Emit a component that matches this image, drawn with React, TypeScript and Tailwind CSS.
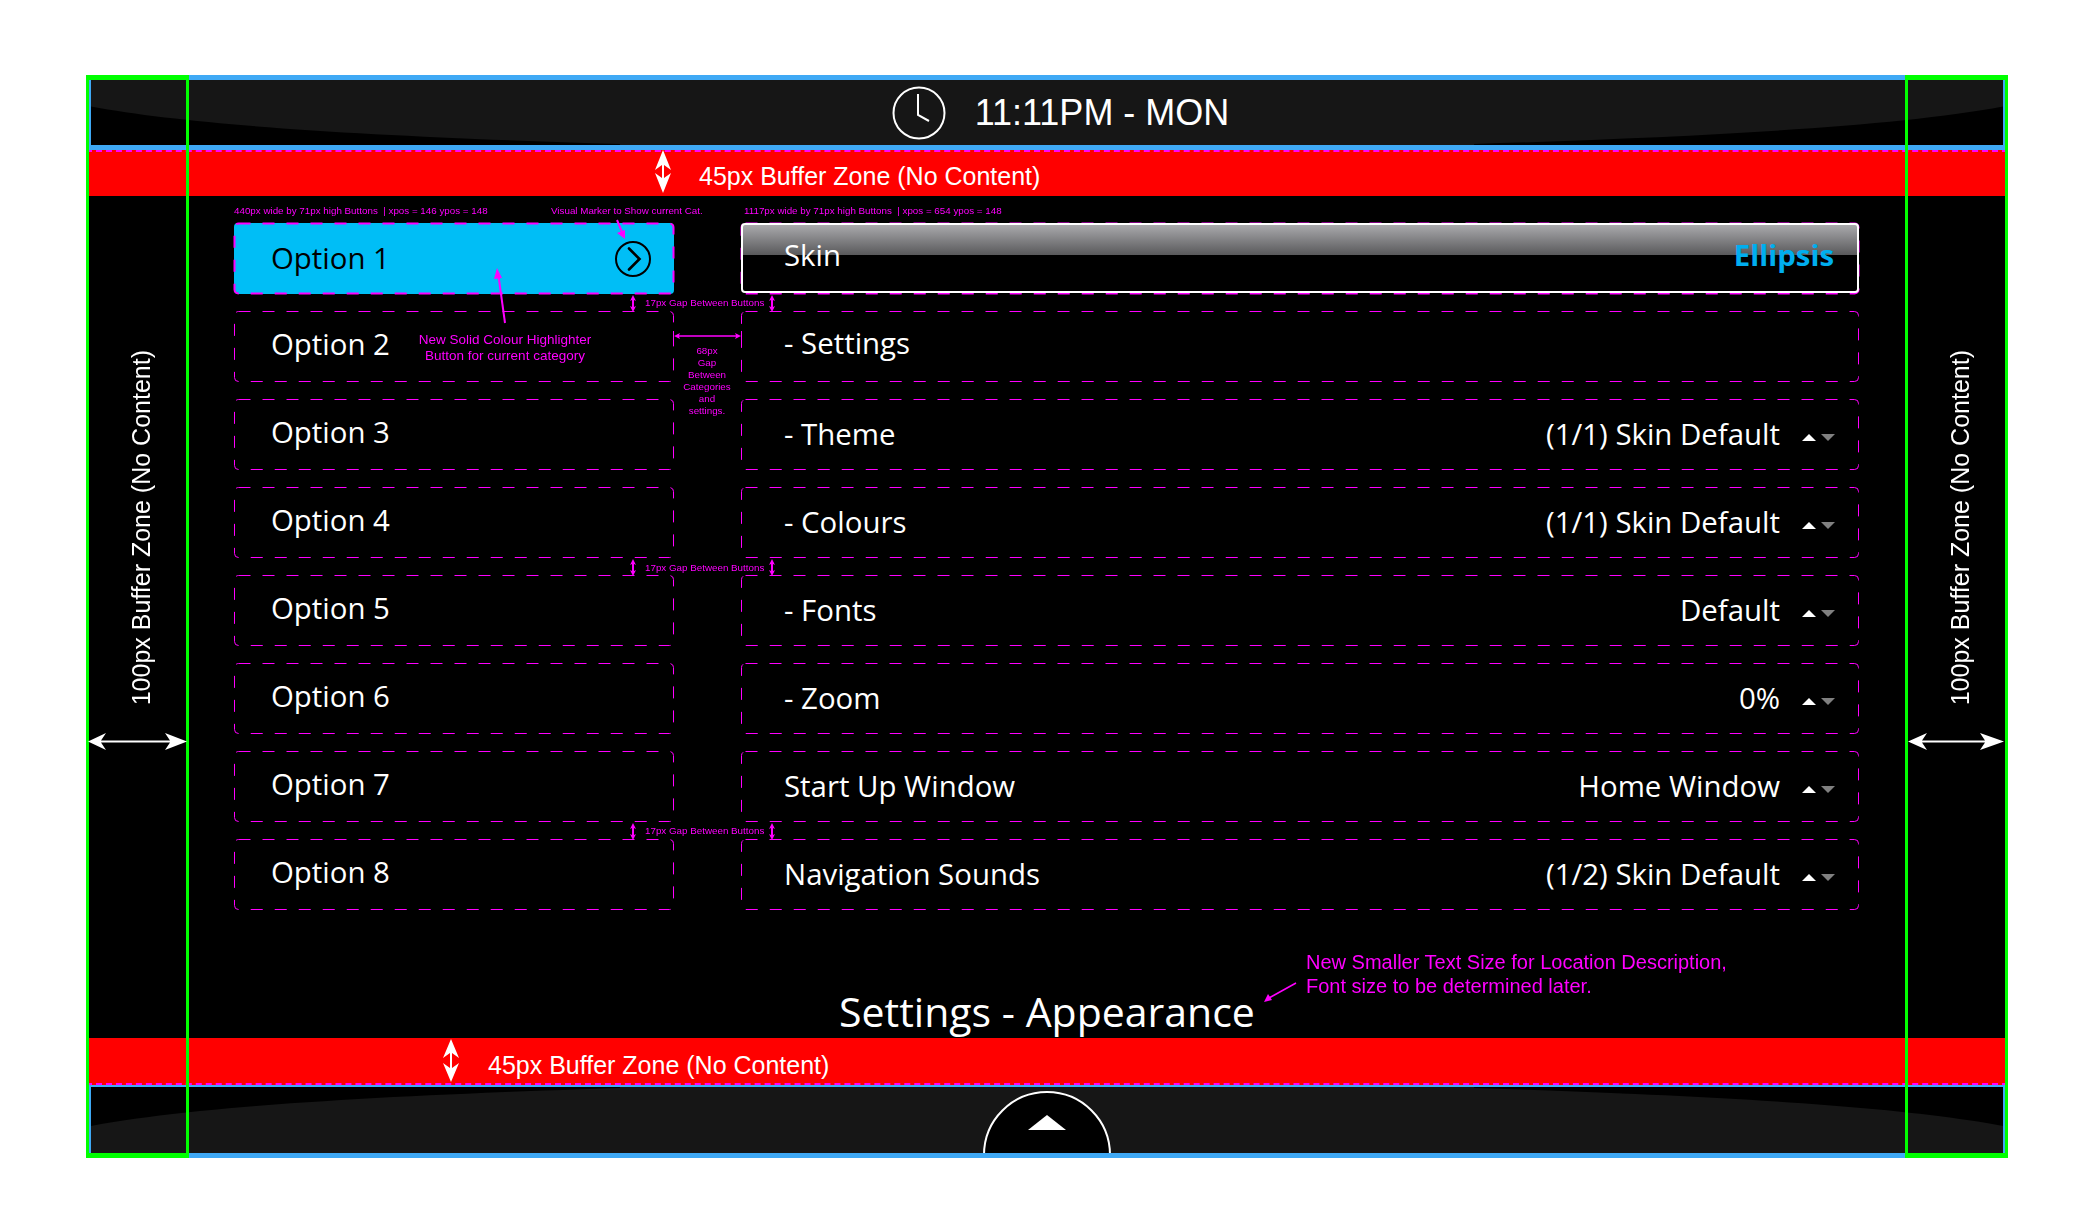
import React from 'react';

const leftOptions = ['Option 2', 'Option 3', 'Option 4', 'Option 5', 'Option 6', 'Option 7', 'Option 8'];

const settingRows = [
  { label: '- Settings' },
  { label: '- Theme', value: '(1/1) Skin Default' },
  { label: '- Colours', value: '(1/1) Skin Default' },
  { label: '- Fonts', value: 'Default' },
  { label: '- Zoom', value: '0%' },
  { label: 'Start Up Window', value: 'Home Window' },
  { label: 'Navigation Sounds', value: '(1/2) Skin Default' }
];

// dashed outline with the long dash of the wireframe
function DashedOutline({ thick = false }: { thick?: boolean }) {
  return (
    <svg className="absolute inset-0 w-full h-full overflow-visible pointer-events-none">
      <rect
        x="0.5"
        y="0.5"
        rx="4"
        className="w-[calc(100%-1px)] h-[calc(100%-1px)]"
        fill="none"
        stroke="#ff00ff"
        strokeWidth={thick ? 2 : 1}
        strokeDasharray="12 12"
      />
    </svg>
  );
}

function Stepper() {
  return (
    <svg width="34" height="10" viewBox="0 0 34 10" className="ml-[22px] mt-[7px]">
      <path d="M0 8 L7 1 L14 8 Z" fill="#ffffff" />
      <path d="M19 1 L33 1 L26 8 Z" fill="#808080" />
    </svg>
  );
}

// the white and magenta measuring arrows, in page coordinates
function Arrows() {
  const gapArrows = [
    [633, 295],
    [772, 295],
    [633, 559],
    [772, 559],
    [633, 823],
    [772, 823]
  ];
  return (
    <svg width="1922" height="1083" viewBox="86 75 1922 1083" className="absolute left-0 top-0 pointer-events-none">
      {/* 45px buffer */}
      <path d="M663 150 L671 170 L664 165 L664 178 L671 173 L663 193 L655 173 L662 178 L662 165 L655 170 Z" fill="#fff" />
      <path d="M451 1039 L459 1058 L452 1053 L452 1068 L459 1063 L451 1082 L443 1063 L450 1068 L450 1053 L443 1058 Z" fill="#fff" />
      {/* 100px buffer */}
      <g fill="#fff">
        <path d="M88 741.5 L106 733 L101 740.5 L170 740.5 L165 733 L187 741.5 L165 750 L170 742.5 L101 742.5 L106 750 Z" />
        <path d="M1908 741.5 L1927 733 L1922 740.5 L1985 740.5 L1980 733 L2004 741.5 L1980 750 L1985 742.5 L1922 742.5 L1927 750 Z" />
      </g>
      {gapArrows.map(([x, y]) => (
        <path
          key={`${x}-${y}`}
          d={`M${x} ${y} L${x + 3} ${y + 6} L${x + 1} ${y + 5} L${x + 1} ${y + 12} L${x + 3} ${y + 11} L${x} ${y + 17} L${x - 3} ${y + 11} L${x - 1} ${y + 12} L${x - 1} ${y + 5} L${x - 3} ${y + 6} Z`}
          fill="#ff00ff"
        />
      ))}
      {/* 68px gap */}
      <path d="M673.5 331 V342 M741.5 331 V342" stroke="#ff00ff" strokeWidth="1" />
      <path d="M674 336 L680 333 L679 335.2 L736 335.2 L735 333 L741 336 L735 339 L736 336.8 L679 336.8 L680 339 Z" fill="#ff00ff" />
      {/* pointers */}
      <path d="M505 323 L498.5 276" stroke="#ff00ff" strokeWidth="2" />
      <path d="M497 268 L502 278 L494 279 Z" fill="#ff00ff" />
      <path d="M617 220 L622 232" stroke="#ff00ff" strokeWidth="2" />
      <path d="M625 239 L617 233 L625 230 Z" fill="#ff00ff" />
      <path d="M1296 983 L1269 998" stroke="#ff00ff" strokeWidth="1.5" />
      <path d="M1264 1002 L1268 994 L1272 1000 Z" fill="#ff00ff" />
    </svg>
  );
}

function BarCurve({ flip = false }: { flip?: boolean }) {
  return (
    <svg
      viewBox="0 0 1916 66"
      preserveAspectRatio="none"
      className={`absolute left-0 top-0 w-full h-full ${flip ? 'rotate-x-180' : ''}`}
    >
      <path
        d="M0 27 C 110 48, 310 58, 530 65 L530 66 L0 66 Z M1916 27 C 1806 48, 1606 58, 1386 65 L1386 66 L1916 66 Z"
        fill="#000"
      />
    </svg>
  );
}

export default function App() {
  return (
    <div className="w-[2094px] h-[1232px] bg-white pt-[75px] pl-[86px] overflow-hidden font-['Open_Sans',sans-serif]">
      <div className="relative w-[1922px] h-[1083px] bg-black flex flex-col">
        {/* top bar */}
        <div className="relative h-[75px] shrink-0 border-[5px] border-[#3fa9f5] bg-[#161616]">
          <BarCurve />
          <div className="relative h-full flex items-center justify-center pl-[27px]">
            <svg width="54" height="54" viewBox="0 0 54 54" className="mr-[29px]">
              <circle cx="27" cy="27" r="25.5" fill="none" stroke="#fff" strokeWidth="2" />
              <path d="M26 8 V29 L37 35" fill="none" stroke="#fff" strokeWidth="2" />
            </svg>
            <span className="font-['Liberation_Sans',sans-serif] text-[36px] text-white">11:11PM - MON</span>
          </div>
        </div>

        {/* red buffer */}
        <div className="h-[46px] shrink-0 bg-[#ff0000] border-t-2 border-dashed border-[#ff00ff] pl-[613px] font-['Liberation_Sans',sans-serif] text-[25px] leading-[48px] text-white">
          45px Buffer Zone (No Content)
        </div>

        {/* main content */}
        <div className="flex-1 flex flex-col pt-[27px] pl-[148px]">
          <div className="flex gap-[67px]">
            <div className="w-[440px] flex flex-col gap-[17px] text-[29.4px] text-white">
              <div className="relative h-[71px] bg-[#00bef6] rounded flex items-center justify-between pl-[37px] pr-[22px] pb-[1px] text-black">
                <DashedOutline thick />
                <span>Option 1</span>
                <svg width="38" height="38" viewBox="0 0 38 38" className="mt-[1px]">
                  <circle cx="19" cy="19" r="17" fill="none" stroke="#000" strokeWidth="2" />
                  <path d="M15 8.5 L25.5 19 L15 29.5" fill="none" stroke="#000" strokeWidth="2.6" strokeLinecap="round" />
                </svg>
              </div>
              {leftOptions.map((option) => (
                <div key={option} className="relative h-[71px] flex items-center pl-[37px] pb-[5px]">
                  <DashedOutline />
                  <span>{option}</span>
                </div>
              ))}
            </div>

            <div className="w-[1118px] flex flex-col gap-[17px] text-[29.4px] text-white">
              <div className="relative h-[71px]">
                <DashedOutline thick />
                <div className="relative h-[70px] rounded-sm border-2 border-white bg-[linear-gradient(#a9a9ac,#58585a_46%,#000_46%)] flex items-center justify-between pl-[41px] pr-[23px] pb-[6px]">
                  <span>Skin</span>
                  <span className="font-bold text-[#00aeef]">Ellipsis</span>
                </div>
              </div>
              {settingRows.map((row) => (
                <div
                  key={row.label}
                  className={`relative h-[71px] flex items-center justify-between pl-[43px] pr-[23px] ${row.value ? 'pb-[0px]' : 'pb-[6px]'}`}
                >
                  <DashedOutline />
                  <span>{row.label}</span>
                  {row.value && (
                    <span className="flex items-center">
                      {row.value}
                      <Stepper />
                    </span>
                  )}
                </div>
              ))}
            </div>
          </div>

          <div className="mt-auto pb-[3px] pr-[148px] text-center text-[41px] leading-[48px] text-white">
            Settings - Appearance
          </div>
        </div>

        {/* red buffer */}
        <div className="h-[47px] shrink-0 bg-[#ff0000] border-b-2 border-dashed border-[#ff00ff] pl-[402px] font-['Liberation_Sans',sans-serif] text-[25px] leading-[55px] text-white">
          45px Buffer Zone (No Content)
        </div>

        {/* bottom bar */}
        <div className="relative h-[73px] shrink-0 border-t-2 border-b-[5px] border-x-[5px] border-[#3fa9f5] bg-[#161616] overflow-hidden">
          <BarCurve flip />
          <div className="absolute left-[892px] top-[4px] w-[128px] h-[128px] rounded-full bg-black border-2 border-white flex justify-center">
            <div className="mt-[22px] w-0 h-0 border-x-[19px] border-x-transparent border-b-[15px] border-b-white" />
          </div>
        </div>

        {/* green side columns */}
        <div className="absolute left-0 top-0 w-[103px] h-full border-y-[5px] border-x-[3px] border-[#00ff00] flex items-center justify-center pointer-events-none">
          <span className="[writing-mode:vertical-rl] rotate-180 font-['Liberation_Sans',sans-serif] text-[25px] text-white mb-[178px] ml-[8px]">
            100px Buffer Zone (No Content)
          </span>
        </div>
        <div className="absolute right-0 top-0 w-[103px] h-full border-y-[5px] border-x-[3px] border-[#00ff00] flex items-center justify-center pointer-events-none">
          <span className="[writing-mode:vertical-rl] rotate-180 font-['Liberation_Sans',sans-serif] text-[25px] text-white mb-[178px] ml-[8px]">
            100px Buffer Zone (No Content)
          </span>
        </div>

        {/* wireframe notes */}
        <div className="absolute inset-0 pointer-events-none font-['Liberation_Sans',sans-serif] text-[#ff00ff] text-[9.8px] leading-[12px] whitespace-pre">
          <div className="absolute left-[148px] top-[130px]">440px wide by 71px high Buttons  | xpos = 146 ypos = 148</div>
          <div className="absolute left-[465px] top-[130px]">Visual Marker to Show current Cat.</div>
          <div className="absolute left-[658px] top-[130px]">1117px wide by 71px high Buttons  | xpos = 654 ypos = 148</div>
          <div className="absolute left-[559px] top-[222px]">17px Gap Between Buttons</div>
          <div className="absolute left-[559px] top-[487px]">17px Gap Between Buttons</div>
          <div className="absolute left-[559px] top-[750px]">17px Gap Between Buttons</div>
          <div className="absolute left-[587px] top-[270px] w-[68px] text-center">
            {'68px\nGap\nBetween\nCategories\nand\nsettings.'}
          </div>
          <div className="absolute left-[330px] top-[257px] w-[178px] text-center text-[13.5px] leading-[16px]">
            {'New Solid Colour Highlighter\nButton for current category'}
          </div>
          <div className="absolute left-[1220px] top-[875px] text-[20px] leading-[24px]">
            {'New Smaller Text Size for Location Description,\nFont size to be determined later.'}
          </div>
        </div>

        <Arrows />
      </div>
    </div>
  );
}
